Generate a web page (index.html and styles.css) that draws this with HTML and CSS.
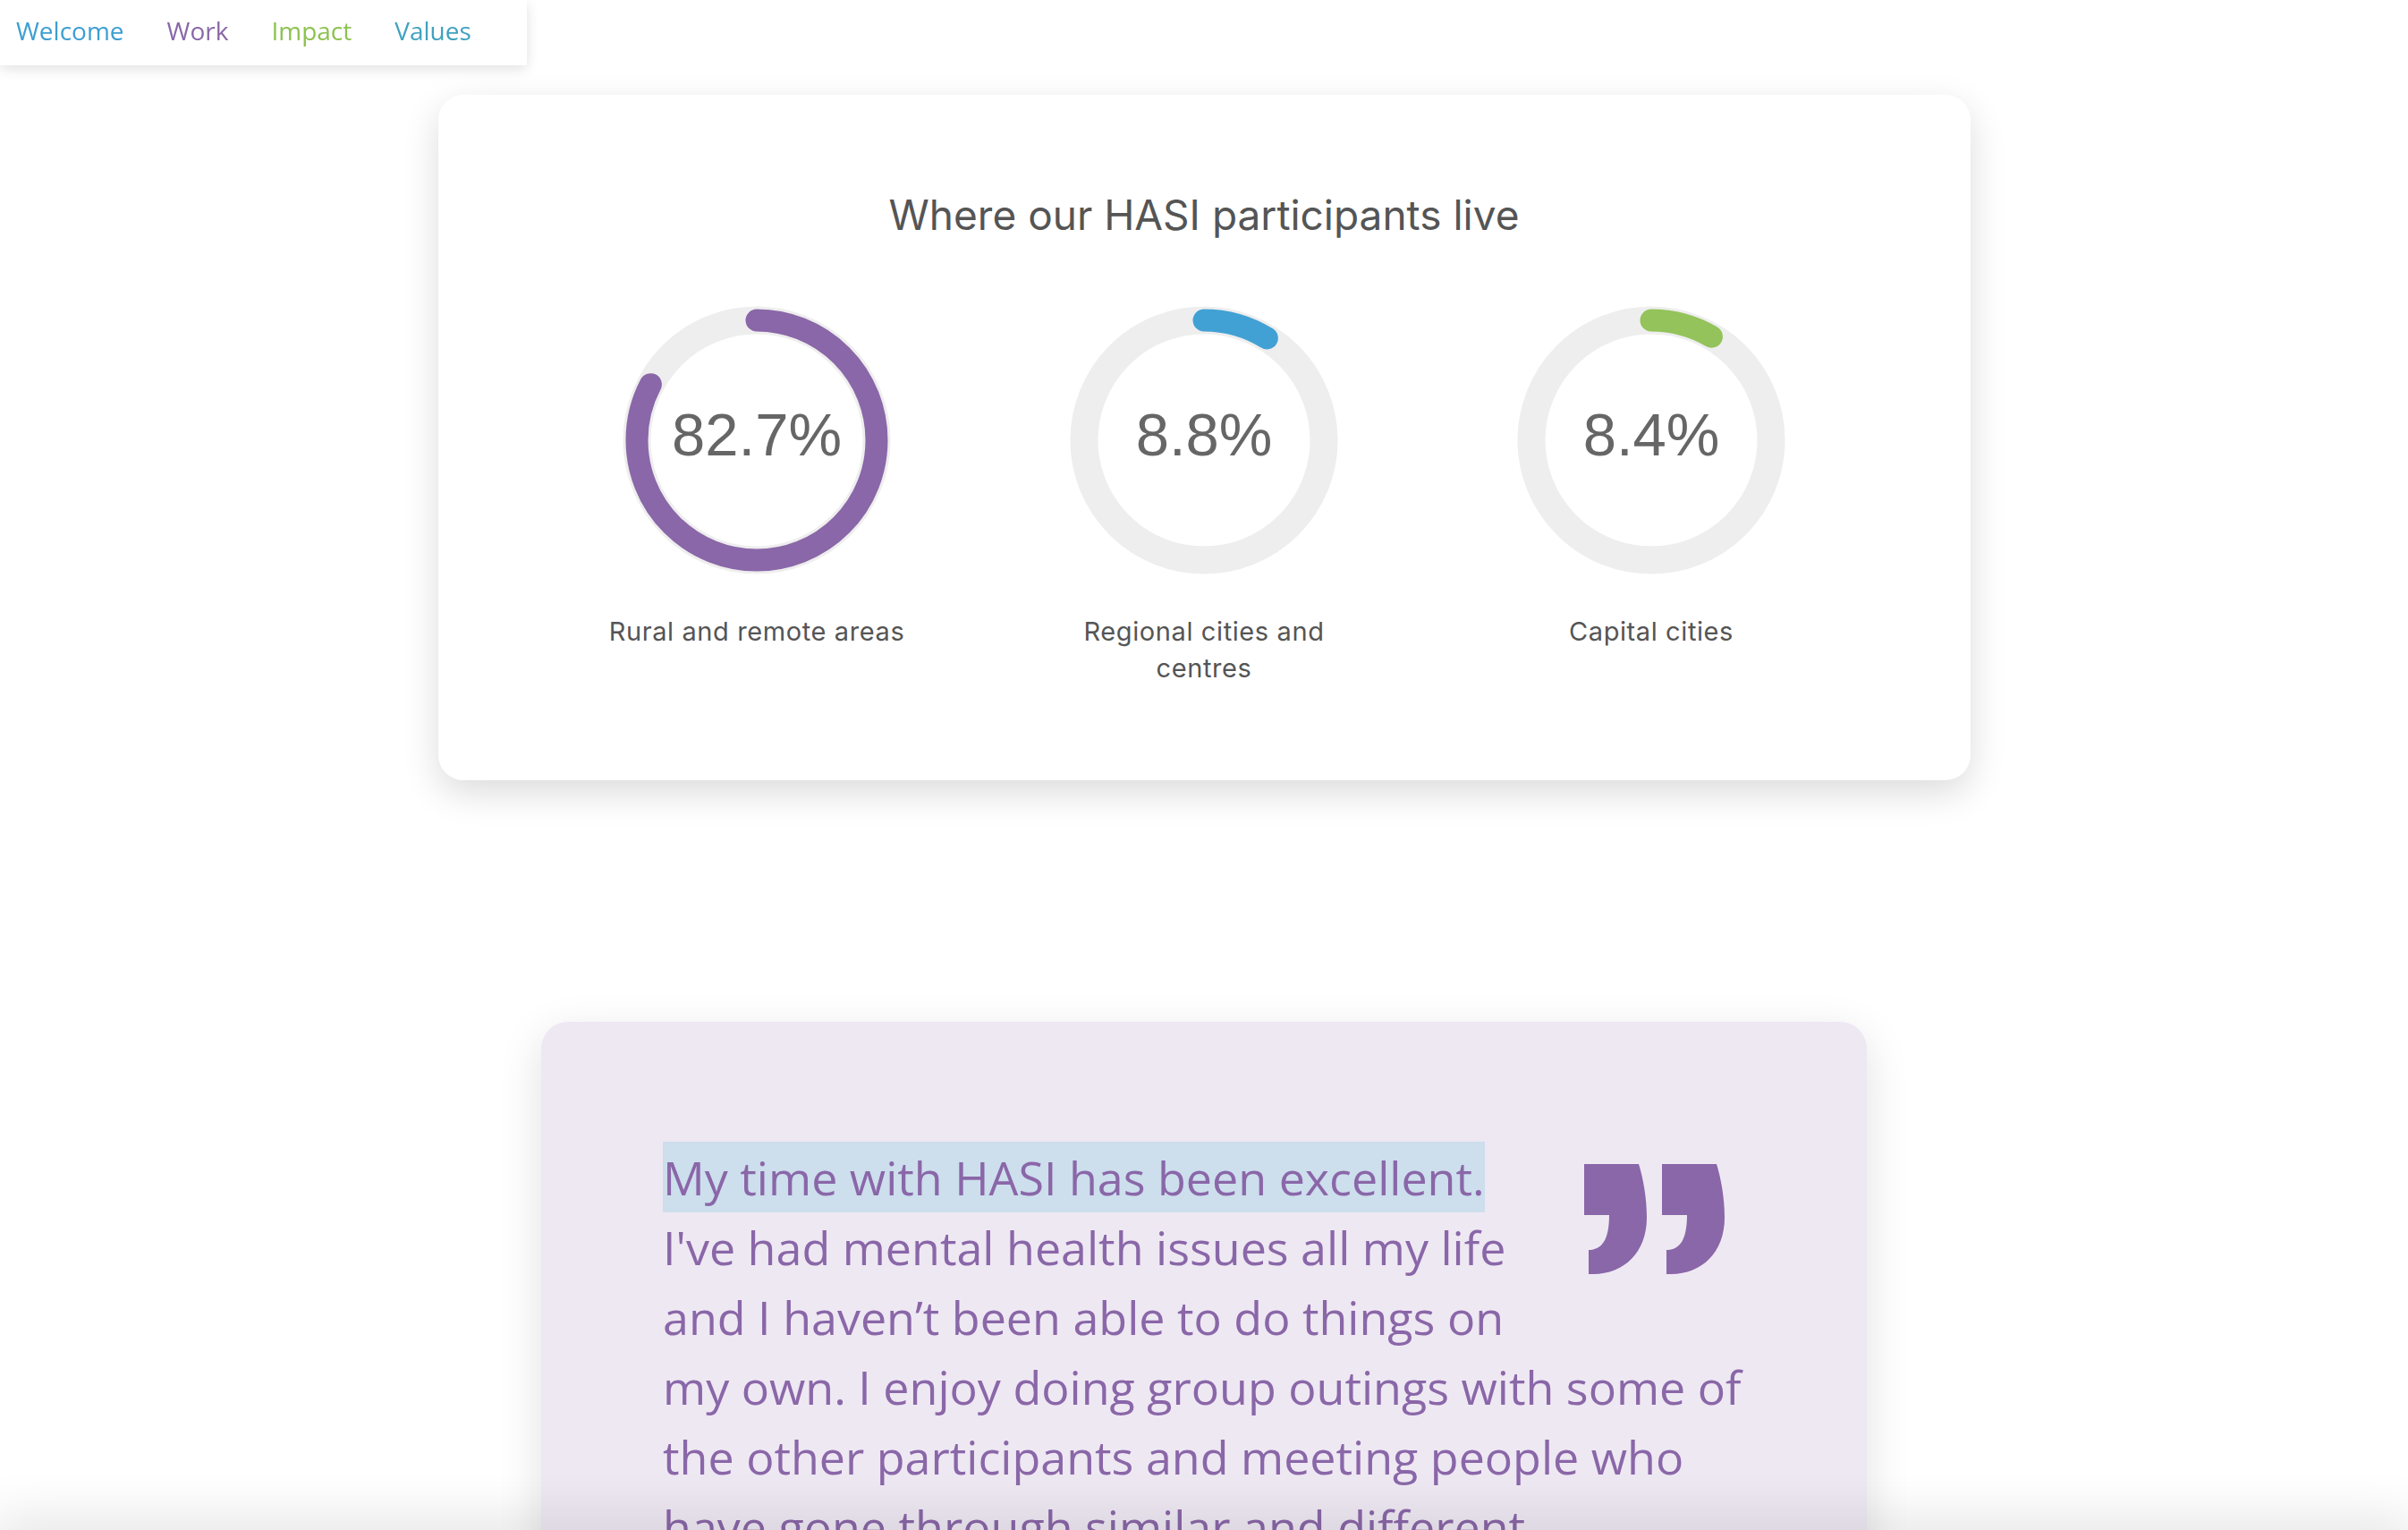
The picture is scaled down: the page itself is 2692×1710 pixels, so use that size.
FILE: index.html
```html
<!DOCTYPE html>
<html lang="en">
<head>
<meta charset="utf-8">
<title>HASI participants</title>
<link rel="stylesheet" href="styles.css">
</head>
<body>
<nav class="nav">
  <a class="nav-link nav-welcome" href="#">Welcome</a>
  <a class="nav-link nav-work" href="#">Work</a>
  <a class="nav-link nav-impact" href="#">Impact</a>
  <a class="nav-link nav-values" href="#">Values</a>
</nav>

<main class="page">
  <section class="stats-card">
    <h2 class="stats-title">Where our HASI participants live</h2>
    <div class="stats-row">
      <div class="stat">
        <div class="donut">
          <svg class="donut-svg" viewBox="0 0 304 304" width="304" height="304">
            <circle class="track" cx="152" cy="152" r="134"/>
            <circle class="arc arc-purple" cx="152" cy="152" r="134" pathLength="100" stroke-dasharray="82.7 100" transform="rotate(-90 152 152)"/>
          </svg>
          <div class="donut-value">82.7%</div>
        </div>
        <p class="stat-label">Rural and remote areas</p>
      </div>
      <div class="stat">
        <div class="donut">
          <svg class="donut-svg" viewBox="0 0 304 304" width="304" height="304">
            <circle class="track" cx="152" cy="152" r="134"/>
            <circle class="arc arc-blue" cx="152" cy="152" r="134" pathLength="100" stroke-dasharray="8.8 100" transform="rotate(-90 152 152)"/>
          </svg>
          <div class="donut-value">8.8%</div>
        </div>
        <p class="stat-label">Regional cities and centres</p>
      </div>
      <div class="stat">
        <div class="donut">
          <svg class="donut-svg" viewBox="0 0 304 304" width="304" height="304">
            <circle class="track" cx="152" cy="152" r="134"/>
            <circle class="arc arc-green" cx="152" cy="152" r="134" pathLength="100" stroke-dasharray="8.4 100" transform="rotate(-90 152 152)"/>
          </svg>
          <div class="donut-value">8.4%</div>
        </div>
        <p class="stat-label">Capital cities</p>
      </div>
    </div>
  </section>

  <section class="quote-card">
    <svg class="quote-mark" viewBox="0 0 158 124" width="158" height="124" aria-hidden="true">
      <path d="M0,0 H61 C66,16 70,38 70,60 C70,98 45,123 10,123 H5 V96 C19,96 28,86 28,57 H0 Z"/>
      <path transform="translate(87,0)" d="M0,0 H61 C66,16 70,38 70,60 C70,98 45,123 10,123 H5 V96 C19,96 28,86 28,57 H0 Z"/>
    </svg>
    <p class="quote-text"><span class="highlight">My time with HASI has been excellent.</span> I've had mental health issues all my life and I haven’t been able to do things on my own. I enjoy doing group outings with some of the other participants and meeting people who have gone through similar and different experiences to me. The staff have helped me feel more confident and connected.</p>
  </section>
</main>

<div class="bottom-shade"></div>
</body>
</html>
```

FILE: styles.css
```css
html, body {
  margin: 0;
  padding: 0;
  background: #ffffff;
}

body {
  font-family: "Open Sans", "Liberation Sans", sans-serif;
  overflow: hidden;
}

/* ---------- top navigation ---------- */
.nav {
  position: fixed;
  top: 0;
  left: 0;
  z-index: 10;
  box-sizing: border-box;
  height: 73px;
  display: flex;
  align-items: center;
  gap: 48px;
  padding: 0 62px 5px 18px;
  background: #ffffff;
  box-shadow: 0 4px 14px rgba(0, 0, 0, 0.12);
}

.nav-link {
  font-family: "Open Sans", sans-serif;
  font-size: 28px;
  text-decoration: none;
  line-height: 1;
}

.nav-welcome { color: #3d9fd2; }
.nav-work { color: #8a67a8; }
.nav-impact { color: #8dc24f; }
.nav-values { color: #40a2c0; }

/* ---------- page ---------- */
.page {
  padding-top: 106px;
  display: flex;
  flex-direction: column;
  align-items: center;
}

/* ---------- stats card ---------- */
.stats-card {
  box-sizing: border-box;
  width: 1713px;
  padding: 104px 0 105px;
  background: #ffffff;
  border-radius: 28px;
  box-shadow: 0 14px 40px rgba(0, 0, 0, 0.14);
}

.stats-title {
  margin: 0;
  text-align: center;
  font-family: "Inter", "Noto Sans", sans-serif;
  font-weight: 400;
  font-size: 46px;
  line-height: 60px;
  color: #555555;
}

.stats-row {
  margin-top: 70px;
  display: flex;
  justify-content: center;
  align-items: flex-start;
}

.stat {
  width: 500px;
  display: flex;
  flex-direction: column;
  align-items: center;
}

.donut {
  display: grid;
  place-items: center;
}

.donut > * {
  grid-area: 1 / 1;
}

.donut-svg {
  display: block;
}

.track {
  fill: #ffffff;
  stroke: #eeeeee;
  stroke-width: 31;
}

.arc {
  fill: none;
  stroke-width: 25;
  stroke-linecap: round;
}

.arc-purple { stroke: #8a67a8; }
.arc-blue { stroke: #42a1d4; }
.arc-green { stroke: #93c35a; }

.donut-value {
  position: relative;
  padding-bottom: 14px;
  font-family: "Liberation Sans", Arial, sans-serif;
  font-size: 67px;
  color: #666666;
  line-height: 1;
}

.stat-label {
  margin: 41px 0 0;
  max-width: 350px;
  text-align: center;
  font-family: "Inter", "Noto Sans", sans-serif;
  font-size: 29px;
  letter-spacing: 0.6px;
  line-height: 41px;
  color: #555555;
}

/* ---------- quote card ---------- */
.quote-card {
  box-sizing: border-box;
  width: 1482px;
  margin-top: 270px;
  padding: 135px 136px 120px;
  background: #eee8f3;
  border-radius: 30px;
  box-shadow: 0 14px 50px rgba(0, 0, 0, 0.12);
}

.quote-mark {
  float: right;
  margin: 24px 22px 50px 40px;
  fill: #8a67a8;
}

.quote-text {
  margin: 0;
  font-family: "Open Sans", sans-serif;
  font-size: 52px;
  line-height: 78px;
  color: #8a67a8;
}

.highlight {
  background: #cddeed;
  padding: 4px 0;
}

/* shadow cast by the fixed bar just below the viewport */
.bottom-shade {
  position: fixed;
  left: 0;
  right: 0;
  bottom: -30px;
  height: 30px;
  box-shadow: 0 0 60px 10px rgba(0, 0, 0, 0.12);
}
```
